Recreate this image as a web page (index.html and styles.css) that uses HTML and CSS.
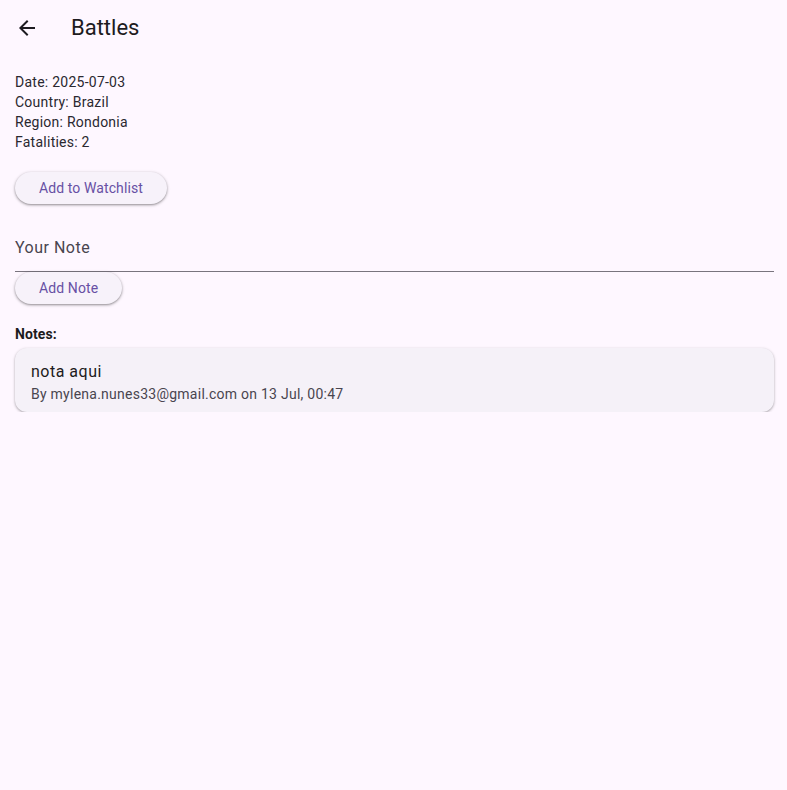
FILE: index.html
```html
<!DOCTYPE html>
<html>
<head>
<meta charset="utf-8">
<link rel="stylesheet" href="styles.css">
</head>
<body>
<header class="appbar">
  <button class="back" aria-label="Back">
    <svg width="24" height="24" viewBox="0 0 24 24"><path d="M20 11H7.83l5.59-5.59L12 4l-8 8 8 8 1.41-1.41L7.83 13H20v-2z" fill="#1d1b20"/></svg>
  </button>
  <h1 class="title">Battles</h1>
</header>
<main class="content">
  <div class="info">
    <div>Date: 2025-07-03</div>
    <div>Country: Brazil</div>
    <div>Region: Rondonia</div>
    <div>Fatalities: 2</div>
  </div>
  <button class="btn btn-watch">Add to Watchlist</button>
  <div class="field"><span class="label">Your Note</span></div>
  <button class="btn">Add Note</button>
  <div class="notes-h">Notes:</div>
  <div class="card">
    <div class="card-title">nota aqui</div>
    <div class="card-sub">By mylena.nunes33@gmail.com on 13 Jul, 00:47</div>
  </div>
</main>
</body>
</html>
```
FILE: styles.css
```css
* { box-sizing: border-box; }
html, body { margin: 0; padding: 0; background: #fef7ff; }
body { font-family: Roboto, "Noto Sans", sans-serif; color: #1d1b20; }
.appbar { height: 56px; display: flex; align-items: center; padding-left: 15px; }
.back { width: 24px; height: 24px; padding: 0; border: 0; background: none; display: flex; }
.title { margin: 0 0 0 32px; font-size: 22px; font-weight: 400; line-height: 28px; color: #1d1b20; }
.content { padding: 16px 13px 0 15px; display: flex; flex-direction: column; align-items: flex-start; }
.info { font-size: 14px; line-height: 20px; letter-spacing: 0.25px; color: #2a2830; }
.btn { height: 32px; padding: 0 24px; border: 0; border-radius: 16px; background: #f7f2fa; color: #6750a4; font-family: Roboto, sans-serif; font-size: 14px; font-weight: 400; letter-spacing: 0.1px; box-shadow: 0 1px 2px rgba(0,0,0,0.3), 0 1px 3px 1px rgba(0,0,0,0.12); }
.btn-watch { margin-top: 20px; }
.field { align-self: stretch; margin-top: 4px; height: 64px; padding-top: 28px; border-bottom: 1px solid #79747e; }
.label { display: block; font-size: 16px; line-height: 24px; letter-spacing: 0.5px; color: #49454f; }
.notes-h { margin-top: 20px; font-size: 14px; line-height: 20px; font-weight: 700; letter-spacing: 0.1px; color: #1d1b20; }
.card { align-self: stretch; margin-top: 4px; padding: 12px 16px 8px; border-radius: 12px; background: #f5f1f8; box-shadow: 0 1px 2px rgba(0,0,0,0.25), 0 1px 3px 1px rgba(0,0,0,0.08); }
.card-title { font-size: 16px; line-height: 24px; letter-spacing: 0.5px; color: #1d1b20; }
.card-sub { font-size: 14px; line-height: 20px; letter-spacing: 0.25px; color: #49454f; }
```
